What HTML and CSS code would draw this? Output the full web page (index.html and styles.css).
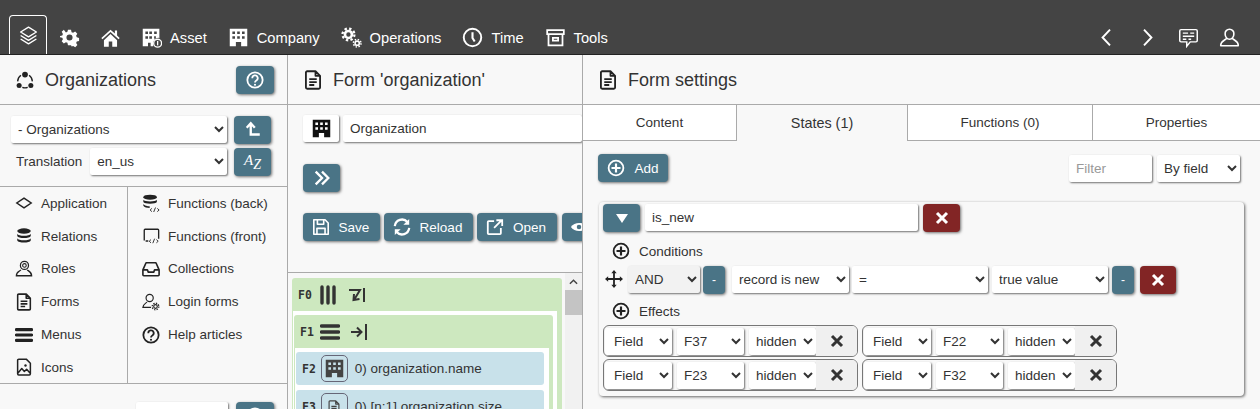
FILE: index.html
```html
<!DOCTYPE html>
<html lang="en">
<head>
    <meta charset="UTF-8">
    <title>Form builder</title>
    <link rel="stylesheet" href="styles.css">
</head>
<body>
    <svg class="defs" width="0" height="0">
        <symbol id="i-doc" viewBox="0 0 20 24"><path d="M3 1.500h10l5.500 5.500V21a1.500 1.500 0 0 1-1.500 1.500H3A1.500 1.500 0 0 1 1.500 21V3A1.500 1.500 0 0 1 3 1.500zM13 1.500V7h5.500M5.500 11h9M5.500 14.500h9M5.500 18h6" fill="none" stroke="currentColor" stroke-width="2.200" stroke-linejoin="round"/></symbol>
        <symbol id="i-building" viewBox="0 0 24 24"><path fill="currentColor" fill-rule="evenodd" d="M2 2h20v20h-7v-5H9v5H2zM5 5v3h3V5zm5.500 0v3h3V5zM16 5v3h3V5zM5 10.500v3h3v-3zm5.500 0v3h3v-3zm5.500 0v3h3v-3z"/></symbol>
        <symbol id="i-plus" viewBox="0 0 20 20"><circle cx="10" cy="10" r="8.200" fill="none" stroke="currentColor" stroke-width="2"/><path d="M10 5v10M5 10h10" stroke="currentColor" stroke-width="2.400"/></symbol>
        <symbol id="i-x" viewBox="0 0 14 14"><path d="M2 2l10 10M12 2L2 12" stroke="currentColor" stroke-width="3"/></symbol>
        <symbol id="i-help" viewBox="0 0 20 20"><circle cx="10" cy="10" r="8.500" fill="none" stroke="currentColor" stroke-width="2"/><path d="M7 8a3 3 0 1 1 4.500 2.500c-1 .6-1.500 1-1.500 2.200" fill="none" stroke="currentColor" stroke-width="2"/><circle cx="10" cy="15.300" r="1.200" fill="currentColor"/></symbol>
        <symbol id="i-bars" viewBox="0 0 20 18"><path d="M1.500 3h17M1.500 9h17M1.500 15h17" stroke="currentColor" stroke-width="3.400" stroke-linecap="round"/></symbol>
    </svg>

    <header class="topbar">
        <a class="nav-tab">
            <svg class="nav-icon" viewBox="0 0 24 24"><path d="M12 2.500l9 5.500-9 5.500L3 8zM3 12l9 5.500 9-5.500M3 16l9 5.500 9-5.500" fill="none" stroke="currentColor" stroke-width="1.600" stroke-linejoin="round"/></svg>
        </a>
        <a class="nav-item">
            <svg class="nav-icon" viewBox="0 0 24 24"><path fill="currentColor" fill-rule="evenodd" d="M10 2h4l.7 3 2 .9 2.700-1.600 2.800 2.800-1.600 2.700.9 2 3 .7v4l-3 .700-.8 2 1.600 2.600-2.800 2.800-2.700-1.600-2 .8L14 22h-4l-.7-3-2-.8-2.700 1.600-2.800-2.800 1.600-2.600-.8-2-3-.7V10l3-.7.8-2-1.600-2.700 2.800-2.800L7.300 5.400l2-.9zM12 8a4 4 0 1 0 0 8 4 4 0 0 0 0-8z" transform="translate(1.500 1.500) scale(.875)"/></svg>
        </a>
        <a class="nav-item">
            <svg class="nav-icon" viewBox="0 0 24 24"><path fill="currentColor" d="M12 3L1.500 12.500l1.300 1.400L12 5.700l9.200 8.200 1.300-1.400-3-2.700V4h-2.500v3.500zM4.500 15v7.500H10v-6h4v6h5.500V15L12 8z"/></svg>
        </a>
        <a class="nav-item">
            <svg class="nav-icon" viewBox="0 0 24 24"><path fill="currentColor" fill-rule="evenodd" d="M2 2h19v10.500a6 6 0 0 0-7 7V22h-3v-4H8v4H2zM5 5v3h3V5zm4.500 0v3h3V5zM15 5v3h3V5zM5 10.500v3h3v-3zm4.500 0v3h3v-3zm5.500 0v3h2v-3z"/><circle cx="19" cy="18.500" r="4.500" fill="none" stroke="currentColor" stroke-width="1.500"/><path d="M19 16v5" stroke="currentColor" stroke-width="1.500"/></svg>
            Asset
        </a>
        <a class="nav-item">
            <svg class="nav-icon" viewBox="0 0 24 24"><use href="#i-building"/></svg>
            Company
        </a>
        <a class="nav-item">
            <svg class="nav-icon" viewBox="0 0 24 24"><g fill="none" stroke="currentColor"><circle cx="8.500" cy="8.500" r="4" stroke-width="3"/><circle cx="8.500" cy="8.500" r="6.800" stroke-width="2.600" stroke-dasharray="2.700 2.640"/><circle cx="18.500" cy="18.500" r="2.400" stroke-width="1.800"/><circle cx="18.500" cy="18.500" r="4.300" stroke-width="1.800" stroke-dasharray="1.700 1.680"/></g></svg>
            Operations
        </a>
        <a class="nav-item">
            <svg class="nav-icon" viewBox="0 0 24 24"><circle cx="12" cy="12" r="10" fill="none" stroke="currentColor" stroke-width="2.200"/><path d="M12 6v6.500l2.500 4" fill="none" stroke="currentColor" stroke-width="2.400"/></svg>
            Time
        </a>
        <a class="nav-item">
            <svg class="nav-icon" viewBox="0 0 24 24"><path d="M2.500 3.500h19V8h-19zM4 8v13h16V8M9 12.500h6v3H9z" fill="none" stroke="currentColor" stroke-width="2"/></svg>
            Tools
        </a>
        <div class="nav-right">
            <svg class="nav-icon" viewBox="0 0 24 24"><path d="M16 3l-8.500 9 8.500 9" fill="none" stroke="currentColor" stroke-width="2.200"/></svg>
            <svg class="nav-icon" viewBox="0 0 24 24"><path d="M8 3l8.500 9L8 21" fill="none" stroke="currentColor" stroke-width="2.200"/></svg>
            <svg class="nav-icon" viewBox="0 0 24 24"><path d="M3.500 3h17A1.500 1.500 0 0 1 22 4.500v11a1.500 1.500 0 0 1-1.500 1.500H14l-4 5v-5H3.500A1.500 1.500 0 0 1 2 15.500v-11A1.500 1.500 0 0 1 3.500 3zM5.500 7h6M14 7h4.500M5.500 10.500h13M5.500 14h4M12 14h3" fill="none" stroke="currentColor" stroke-width="1.700"/></svg>
            <svg class="nav-icon" viewBox="0 0 24 24"><path d="M12 2.500a5 5 0 0 1 5 5.500c0 3-2 6-5 6s-5-3-5-6a5 5 0 0 1 5-5.500zM8.500 13c-1 2-6 2.500-6.500 7.500v1h20v-1c-.5-5-5.500-5.500-6.500-7.500" fill="none" stroke="currentColor" stroke-width="1.800" stroke-linejoin="round"/></svg>
        </div>
    </header>

    <main class="panels">
        <section class="panel panel-left">
            <div class="panel-head">
                <svg class="head-icon" viewBox="0 0 20 20"><circle cx="10" cy="4" r="3.200" fill="currentColor"/><circle cx="3.500" cy="16" r="2.800" fill="currentColor"/><circle cx="16.500" cy="16" r="2.800" fill="currentColor"/><path d="M5.500 4.800A9 9 0 0 0 1.800 11.500M14.500 4.800a9 9 0 0 1 3.700 6.700M7 18.200a9 9 0 0 0 6 0" fill="none" stroke="currentColor" stroke-width="1.500"/></svg>
                <h2>Organizations</h2>
                <button class="btn btn-icon btn-help push-right"><svg class="btn-svg" viewBox="0 0 20 20"><use href="#i-help"/></svg></button>
            </div>
            <div class="picker">
                <div class="picker-row">
                    <select class="field grow"><option>- Organizations</option></select>
                    <button class="btn btn-icon"><svg class="btn-svg" viewBox="0 0 20 20"><path d="M3 7.500L7.500 2.500 12 7.500M7.500 3v12h10" fill="none" stroke="currentColor" stroke-width="2.600"/></svg></button>
                </div>
                <div class="picker-row">
                    <span class="picker-label">Translation</span>
                    <select class="field grow"><option>en_us</option></select>
                    <button class="btn btn-icon btn-az"><i>A<sub>Z</sub></i></button>
                </div>
            </div>
            <div class="entries">
                <div class="entry-col">
                    <a class="entry"><svg viewBox="0 0 20 20"><path d="M10 4.500L18 10l-8 5.500L2 10z" fill="none" stroke="currentColor" stroke-width="1.600"/></svg>Application</a>
                    <a class="entry"><svg viewBox="0 0 20 20"><ellipse cx="10" cy="4.500" rx="7.500" ry="3" fill="currentColor"/><path d="M2.500 7.500c1 3 14 3 15 0V10c-1 3-14 3-15 0zM2.500 12.500c1 3 14 3 15 0V15c-1 3-14 3-15 0z" fill="currentColor"/></svg>Relations</a>
                    <a class="entry"><svg viewBox="0 0 20 20"><circle cx="10.500" cy="6" r="4.500" fill="none" stroke="currentColor" stroke-width="1.400"/><circle cx="10.500" cy="6" r="2" fill="none" stroke="currentColor" stroke-width="1.200"/><path d="M6.500 11c-1 1.500-5 2-5 6.500h17c0-4-3-5-5-6.500" fill="none" stroke="currentColor" stroke-width="1.400"/></svg>Roles</a>
                    <a class="entry"><svg viewBox="0 0 20 24"><use href="#i-doc"/></svg>Forms</a>
                    <a class="entry"><svg viewBox="0 0 20 18"><use href="#i-bars"/></svg>Menus</a>
                    <a class="entry"><svg viewBox="0 0 20 24"><path d="M3 1.500h10l5.500 5.500V21a1.500 1.500 0 0 1-1.500 1.500H3A1.500 1.500 0 0 1 1.500 21V3A1.500 1.500 0 0 1 3 1.500zM2 20l5-6 3.500 4 3-3 4.500 5" fill="none" stroke="currentColor" stroke-width="2" stroke-linejoin="round"/><circle cx="12" cy="10" r="1.600" fill="currentColor"/></svg>Icons</a>
                </div>
                <div class="entry-col">
                    <a class="entry"><svg viewBox="0 0 20 20"><ellipse cx="9" cy="3.500" rx="7.500" ry="2.800" fill="currentColor"/><path d="M1.500 6.500c1 2.500 14 2.500 15 0V9c-1 2.500-14 2.500-15 0zM1.500 11c1 2 5 2.500 7 2.500v2c-3 0-6-.8-7-2.500z" fill="currentColor"/><path d="M11 16l-2 1.800 2 1.800M17 16l2 1.800-2 1.800M15 15l-2 5" fill="none" stroke="currentColor" stroke-width="1"/></svg>Functions (back)</a>
                    <a class="entry"><svg viewBox="0 0 20 20"><path d="M2.500 15V3.500a1 1 0 0 1 1-1h14a1 1 0 0 1 1 1V13M4 15.500h3" fill="none" stroke="currentColor" stroke-width="1.500"/><path d="M10 14l-2 1.800 2 1.800M16 14l2 1.800-2 1.800M14 13l-2 5" fill="none" stroke="currentColor" stroke-width="1"/></svg>Functions (front)</a>
                    <a class="entry"><svg viewBox="0 0 20 20"><path d="M4.500 3h11L19 11v5.500a1 1 0 0 1-1 1H2a1 1 0 0 1-1-1V11zM1 11h5l1 2.500h6l1-2.500h5" fill="none" stroke="currentColor" stroke-width="1.800" stroke-linejoin="round"/></svg>Collections</a>
                    <a class="entry"><svg viewBox="0 0 20 20"><circle cx="8.500" cy="5.500" r="4" fill="none" stroke="currentColor" stroke-width="1.300"/><path d="M5.500 10c-1 1.500-4 2-4.500 6h9" fill="none" stroke="currentColor" stroke-width="1.300"/><circle cx="15" cy="15" r="2" fill="none" stroke="currentColor" stroke-width="1.300"/><circle cx="15" cy="15" r="3.700" fill="none" stroke="currentColor" stroke-width="1.400" stroke-dasharray="1.500 1.400"/></svg>Login forms</a>
                    <a class="entry"><svg viewBox="0 0 20 20"><use href="#i-help"/></svg>Help articles</a>
                </div>
            </div>
            <div class="panel-next">
                <svg class="next-icon" viewBox="0 0 20 24"><use href="#i-doc"/></svg>
                <select class="field next-select push-right"><option></option></select>
                <button class="btn btn-icon btn-help"><svg class="btn-svg" viewBox="0 0 20 20"><use href="#i-help"/></svg></button>
            </div>
        </section>

        <section class="panel panel-mid">
            <div class="panel-head">
                <svg class="head-icon" viewBox="0 0 20 24"><use href="#i-doc"/></svg>
                <h2>Form 'organization'</h2>
            </div>
            <div class="form-tools">
                <div class="name-row">
                    <span class="icon-pick"><svg viewBox="0 0 24 24"><use href="#i-building"/></svg></span>
                    <input class="field grow" value="Organization">
                </div>
                <button class="btn btn-icon btn-more"><svg class="btn-svg" viewBox="0 0 20 20"><path d="M3 3l7 7-7 7M10 3l7 7-7 7" fill="none" stroke="currentColor" stroke-width="2.600"/></svg></button>
                <div class="action-row">
                    <button class="btn btn-save"><svg class="btn-svg" viewBox="0 0 20 20"><path d="M2 2h12.500L18 5.500V18H2zM6 2v5h7V2M5.500 18v-6.500h9V18" fill="none" stroke="currentColor" stroke-width="1.800" stroke-linejoin="round"/></svg>Save</button>
                    <button class="btn btn-reload"><svg class="btn-svg" viewBox="0 0 20 20"><path d="M2 9a8 8 0 0 1 14-4.500M18 11a8 8 0 0 1-14 4.500" fill="none" stroke="currentColor" stroke-width="2.500"/><path d="M18 1v6.500h-6.500zM2 19v-6.500h6.500z" fill="currentColor"/></svg>Reload</button>
                    <button class="btn btn-open"><svg class="btn-svg" viewBox="0 0 20 20"><path d="M9 3.500H3A1 1 0 0 0 2 4.500V17a1 1 0 0 0 1 1h12.500a1 1 0 0 0 1-1v-6M9 11l8-8M11.500 2.500H18V9" fill="none" stroke="currentColor" stroke-width="2"/></svg>Open</button>
                    <button class="btn btn-eye"><svg class="btn-svg" viewBox="0 0 20 20"><path d="M1 10c4-6 14-6 18 0-4 6-14 6-18 0z" fill="currentColor"/><circle cx="10" cy="10" r="2.500" fill="#4a7486"/></svg></button>
                </div>
            </div>
            <div class="builder">
                <div class="tree">
                    <div class="box-green">
                        <div class="box-head">
                            <b class="ref">F0</b>
                            <svg class="tree-icon" viewBox="0 0 18 20"><path d="M3 2v16M9 2v16M15 2v16" stroke="currentColor" stroke-width="3.400" stroke-linecap="round"/></svg>
                            <svg class="tree-icon tree-icon-gap" viewBox="0 0 18 20"><path d="M1 5h11l-6 10M6 9l-.5 6 6-1M16 3v14" fill="none" stroke="currentColor" stroke-width="2"/></svg>
                        </div>
                        <div class="box-body">
                            <div class="box-green box-inner">
                                <div class="box-head">
                                    <b class="ref">F1</b>
                                    <svg class="tree-icon" viewBox="0 0 20 18"><use href="#i-bars"/></svg>
                                    <svg class="tree-icon tree-icon-gap" viewBox="0 0 18 20"><path d="M1 10h10M7 5.500l4.500 4.500L7 14.500M16 2v16" fill="none" stroke="currentColor" stroke-width="2"/></svg>
                                </div>
                                <div class="box-body fields">
                                    <div class="field-row">
                                        <b class="ref">F2</b>
                                        <span class="field-icon"><svg viewBox="0 0 24 24"><use href="#i-building"/></svg></span>
                                        <span>0) organization.name</span>
                                    </div>
                                    <div class="field-row">
                                        <b class="ref">F3</b>
                                        <span class="field-icon field-icon-doc"><svg viewBox="0 0 20 24"><use href="#i-doc"/></svg></span>
                                        <span>0) [n:1] organization.size</span>
                                    </div>
                                </div>
                            </div>
                        </div>
                    </div>
                </div>
                <div class="scrollbar">
                    <svg class="scroll-up" viewBox="0 0 10 6"><path d="M1 5l4-4 4 4" fill="none" stroke="currentColor" stroke-width="1.600"/></svg>
                    <div class="scroll-thumb"></div>
                </div>
            </div>
        </section>

        <section class="panel panel-right">
            <div class="panel-head">
                <svg class="head-icon" viewBox="0 0 20 24"><use href="#i-doc"/></svg>
                <h2>Form settings</h2>
            </div>
            <div class="tabs">
                <div class="tab tab-content">Content</div>
                <div class="tab tab-states active">States (1)</div>
                <div class="tab tab-functions">Functions (0)</div>
                <div class="tab tab-props">Properties</div>
            </div>
            <div class="settings">
                <div class="settings-bar">
                    <button class="btn btn-add"><svg class="btn-svg" viewBox="0 0 20 20"><use href="#i-plus"/></svg>Add</button>
                    <input class="field filter push-right" placeholder="Filter">
                    <select class="field by-field"><option>By field</option></select>
                </div>
                <div class="state-card">
                    <div class="state-head">
                        <button class="btn btn-icon"><svg class="btn-tri" viewBox="0 0 12 9"><path d="M0 0h12L6 9z" fill="currentColor"/></svg></button>
                        <input class="field state-name" value="is_new">
                        <button class="btn btn-icon btn-red"><svg class="btn-x" viewBox="0 0 14 14"><use href="#i-x"/></svg></button>
                    </div>
                    <div class="group-label"><svg viewBox="0 0 20 20"><use href="#i-plus"/></svg>Conditions</div>
                    <div class="condition">
                        <svg class="move" viewBox="0 0 20 20"><path fill="currentColor" d="M10 0l3 3.500h-2v5.500h5.500V7l3.500 3-3.500 3v-2H11v5.500h2L10 20l-3-3.500h2V11H3.500v2L0 10l3.500-3v2H9V3.500H7z"/></svg>
                        <select class="field cond-and"><option>AND</option></select>
                        <button class="btn btn-minus">-</button>
                        <select class="field cond-side"><option>record is new</option></select>
                        <select class="field cond-op"><option>=</option></select>
                        <select class="field cond-value"><option>true value</option></select>
                        <button class="btn btn-minus">-</button>
                        <button class="btn btn-icon btn-red cond-del"><svg class="btn-x" viewBox="0 0 14 14"><use href="#i-x"/></svg></button>
                    </div>
                    <div class="group-label"><svg viewBox="0 0 20 20"><use href="#i-plus"/></svg>Effects</div>
                    <div class="effects">
                        <div class="effect">
                            <select class="field fx"><option>Field</option></select>
                            <select class="field fx"><option>F37</option></select>
                            <select class="field fx"><option>hidden</option></select>
                            <span class="fx-del"><svg viewBox="0 0 14 14"><use href="#i-x"/></svg></span>
                        </div>
                        <div class="effect">
                            <select class="field fx"><option>Field</option></select>
                            <select class="field fx"><option>F22</option></select>
                            <select class="field fx"><option>hidden</option></select>
                            <span class="fx-del"><svg viewBox="0 0 14 14"><use href="#i-x"/></svg></span>
                        </div>
                        <div class="effect">
                            <select class="field fx"><option>Field</option></select>
                            <select class="field fx"><option>F23</option></select>
                            <select class="field fx"><option>hidden</option></select>
                            <span class="fx-del"><svg viewBox="0 0 14 14"><use href="#i-x"/></svg></span>
                        </div>
                        <div class="effect">
                            <select class="field fx"><option>Field</option></select>
                            <select class="field fx"><option>F32</option></select>
                            <select class="field fx"><option>hidden</option></select>
                            <span class="fx-del"><svg viewBox="0 0 14 14"><use href="#i-x"/></svg></span>
                        </div>
                    </div>
                </div>
            </div>
        </section>
    </main>
</body>
</html>
```
FILE: styles.css
```css
html, body {
    margin: 0;
    height: 409px;
    overflow: hidden;
}

body {
    font-family: "Liberation Sans", Arial, sans-serif;
    font-size: 13.5px;
    color: #333;
    background: #f8f8f8;
    display: flex;
    flex-direction: column;
}

.defs {
    display: block;
    height: 0;
}

/* top bar */
.topbar {
    flex: none;
    box-sizing: border-box;
    height: 55px;
    background: #444;
    border-bottom: 1px solid #222;
    color: #fff;
    display: flex;
    align-items: flex-end;
    padding-left: 9px;
    font-size: 14.7px;
}

.nav-icon {
    width: 21px;
    height: 21px;
    flex: none;
}

.nav-tab {
    box-sizing: border-box;
    width: 38px;
    height: 39px;
    border: 1px solid #fff;
    border-bottom: 0;
    border-radius: 4px 4px 0 0;
    display: flex;
    align-items: center;
    justify-content: center;
    margin-right: 12px;
    padding-top: 1px;
}

.nav-item {
    height: 39px;
    display: flex;
    align-items: center;
    gap: 8px;
    margin-right: 21px;
    padding-top: 6px;
    box-sizing: border-box;
}

.nav-tab + .nav-item, .nav-tab + .nav-item + .nav-item {
    margin-right: 20px;
}

.nav-right {
    margin-left: auto;
    height: 39px;
    padding: 6px 20px 0 0;
    box-sizing: border-box;
    display: flex;
    align-items: center;
    gap: 20px;
}

/* panels */
.panels {
    flex: 1;
    display: flex;
    min-height: 0;
}

.panel {
    box-sizing: border-box;
    display: flex;
    flex-direction: column;
    overflow: hidden;
    border-right: 1px solid #aaa;
}

.panel-left {
    width: 288px;
}

.panel-mid {
    width: 295px;
}

.panel-right {
    flex: 1;
    border-right: 0;
}

.panel-head {
    flex: none;
    box-sizing: border-box;
    height: 50px;
    padding: 1px 13px 0 16px;
    border-bottom: 1px solid #aaa;
    display: flex;
    align-items: center;
    gap: 11px;
}

.panel-head h2 {
    margin: 0;
    font-size: 18px;
    font-weight: 400;
    color: #333;
}

.head-icon {
    width: 18px;
    height: 20px;
    flex: none;
    color: #222;
}

.push-right {
    margin-left: auto;
}

/* controls */
.field {
    box-sizing: border-box;
    height: 27px;
    min-width: 0;
    background: #fff;
    border: 0;
    border-radius: 2px;
    box-shadow: 1px 1px 2px rgba(0, 0, 0, 0.55);
    font-family: inherit;
    font-size: 13.5px;
    color: #333;
    padding: 0 3px;
}

input.field {
    padding: 0 7px;
}

.field::placeholder {
    color: #999;
}

.grow {
    flex: 1;
}

.btn {
    box-sizing: border-box;
    height: 28px;
    flex: none;
    border: 0;
    border-radius: 4px;
    background: #4a7486;
    color: #fff;
    font-family: inherit;
    font-size: 13.5px;
    box-shadow: 1px 1px 3px rgba(0, 0, 0, 0.55);
    display: inline-flex;
    align-items: center;
    justify-content: center;
    gap: 9px;
    padding: 0;
}

.btn-icon {
    width: 37px;
}

.btn-help {
    width: 38px;
}

.btn-svg {
    width: 18px;
    height: 18px;
    flex: none;
}

.btn-az {
    font-family: "Liberation Serif", serif;
    font-size: 15px;
}

.btn-az sub {
    font-size: 14px;
}

.btn-red {
    background: #822525;
}

.btn-x {
    width: 14px;
    height: 14px;
}

.btn-tri {
    width: 12px;
    height: 9px;
}

.btn-minus {
    width: 22px;
    font-size: 12px;
    margin-right: 4px;
}

/* left panel */
.picker {
    flex: none;
    box-sizing: border-box;
    height: 82px;
    padding: 11px 16px 0 11px;
    border-bottom: 1px solid #aaa;
    display: flex;
    flex-direction: column;
    gap: 4px;
}

.picker-row {
    display: flex;
    align-items: flex-start;
    gap: 7px;
}

.picker-label {
    margin: 0 1px 0 5px;
    line-height: 27px;
}

.entries {
    flex: none;
    box-sizing: border-box;
    height: 197px;
    display: flex;
    border-bottom: 1px solid #aaa;
}

.entry-col:first-child {
    box-sizing: border-box;
    width: 128px;
    border-right: 1px solid #aaa;
    padding-left: 15px;
}

.entry-col:last-child {
    padding-left: 14px;
}

.entry {
    height: 32.8px;
    display: flex;
    align-items: center;
    gap: 8px;
}

.entry svg {
    width: 18px;
    height: 18px;
    flex: none;
    color: #222;
}

.panel-next {
    flex: none;
    padding: 18px 13px 0 11px;
    display: flex;
    align-items: flex-start;
    gap: 8px;
}

.next-icon {
    width: 12px;
    height: 20px;
    margin-top: 6px;
    color: #222;
}

.next-select {
    width: 92px;
}

/* middle panel */
.form-tools {
    flex: none;
    box-sizing: border-box;
    height: 168px;
    padding: 10px 0 0 15px;
    border-bottom: 1px solid #aaa;
    overflow: hidden;
}

.name-row {
    display: flex;
    gap: 4px;
}

.icon-pick {
    box-sizing: border-box;
    flex: none;
    width: 36px;
    height: 27px;
    background: #fff;
    border-radius: 2px;
    box-shadow: 1px 1px 2px rgba(0, 0, 0, 0.55);
    display: flex;
    align-items: center;
    justify-content: center;
}

.icon-pick svg {
    width: 21px;
    height: 21px;
    color: #111;
}

.btn-more {
    margin-top: 22px;
    display: flex;
}

.action-row {
    margin-top: 21px;
    display: flex;
    gap: 4px;
    width: 340px;
}

.btn-save, .btn-reload, .btn-open {
    padding-right: 2px;
}

.btn-save {
    width: 77px;
}

.btn-reload {
    width: 89px;
}

.btn-open {
    width: 80px;
}

.btn-eye {
    width: 60px;
    margin-left: 1px;
    justify-content: flex-start;
    padding-left: 8px;
}

.builder {
    flex: 1;
    min-height: 0;
    display: flex;
    padding-top: 5px;
    overflow: hidden;
}

.tree {
    flex: none;
    width: 277px;
    padding-left: 4px;
    box-sizing: border-box;
}

.box-green {
    width: 270px;
    background: #cde8bf;
    border-radius: 3px;
}

.box-head {
    height: 33px;
    box-sizing: border-box;
    padding-left: 6px;
    display: flex;
    align-items: center;
    gap: 6px;
}

.ref {
    font-family: "DejaVu Sans Mono", monospace;
    font-size: 11.5px;
    color: #333;
}

.tree-icon {
    width: 20px;
    height: 20px;
    flex: none;
    color: #333;
}

.tree-icon-gap {
    margin-left: 3px;
}

.box-body {
    background: #fff;
    margin: 0 5px 0 1px;
    padding: 4px 0 0 1px;
}

.box-inner {
    width: 259px;
}

.fields {
    margin: 0 4px 0 1px;
    padding: 4px 0 0 1px;
    display: flex;
    flex-direction: column;
    gap: 5px;
}

.field-row {
    height: 33px;
    width: 248px;
    background: #c8e1ea;
    border-radius: 3px;
    display: flex;
    align-items: center;
    gap: 5px;
    padding-left: 6px;
    box-sizing: border-box;
    font-size: 13.5px;
    flex: none;
}

.field-icon {
    box-sizing: border-box;
    width: 27px;
    height: 27px;
    border: 1px solid #667;
    border-radius: 5px;
    display: flex;
    align-items: center;
    justify-content: center;
    margin-right: 2px;
    flex: none;
}

.field-icon svg {
    width: 21px;
    height: 21px;
    color: #444;
}

.field-icon-doc svg {
    width: 12px;
    height: 14px;
}

.scrollbar {
    flex: 1;
    background: #f1f1f1;
    margin-top: -5px;
    display: flex;
    flex-direction: column;
    align-items: center;
}

.scroll-up {
    width: 9px;
    height: 6px;
    margin-top: 6px;
    color: #444;
}

.scroll-thumb {
    width: 100%;
    height: 25px;
    background: #c4c4c4;
    margin-top: 5px;
}

/* right panel */
.tabs {
    flex: none;
    display: flex;
    height: 36px;
}

.tab {
    box-sizing: border-box;
    background: #fff;
    border-right: 1px solid #aaa;
    border-bottom: 1px solid #aaa;
    display: flex;
    align-items: center;
    justify-content: center;
    padding-bottom: 1px;
}

.tab-content {
    width: 154px;
}

.tab-states {
    width: 171px;
    padding: 0;
}

.tab.active {
    background: #f8f8f8;
    border-bottom: 0;
    font-size: 14.4px;
}

.tab-functions {
    width: 185px;
}

.tab-props {
    flex: 1;
    border-right: 0;
}

.settings {
    flex: 1;
    min-height: 0;
    padding: 13px 20px 0 15px;
}

.settings-bar {
    display: flex;
    align-items: center;
    gap: 5px;
    height: 28px;
}

.btn-add {
    width: 70px;
}

.filter, .by-field {
    width: 83px;
}

.state-card {
    box-sizing: border-box;
    margin: 20px 0 0 1px;
    width: 645px;
    height: 194px;
    border-radius: 4px;
    background: #f8f8f8;
    box-shadow: 1px 1px 3px rgba(0, 0, 0, 0.6);
    padding: 2px 4px;
}

.state-head {
    display: flex;
    gap: 5px;
}

.state-name {
    width: 273px;
}

.group-label {
    height: 14px;
    display: flex;
    align-items: center;
    gap: 9px;
    margin-left: 9px;
}

.state-head + .group-label {
    margin-top: 12px;
}

.group-label svg {
    width: 18px;
    height: 18px;
    flex: none;
    color: #222;
}

.condition {
    display: flex;
    align-items: flex-start;
    gap: 3px;
    margin: 8px 0 10px 2px;
}

.move {
    width: 18px;
    height: 18px;
    flex: none;
    margin: 4px 2px 0 0;
    color: #222;
}

.cond-and {
    width: 72px;
    background: #f2f2f2;
}

.cond-side {
    width: 117px;
}

.cond-op {
    width: 136px;
}

.cond-value {
    width: 116px;
    margin: 0 1px;
}

.cond-del {
    width: 36px;
    margin-left: -1px;
}

.effects {
    margin-top: 7px;
    display: grid;
    grid-template-columns: 255px 255px;
    column-gap: 4px;
    row-gap: 2px;
}

.effect {
    box-sizing: border-box;
    height: 32px;
    border: 1px solid #777;
    border-radius: 6px;
    display: flex;
    align-items: center;
    gap: 5px;
    padding-left: 1px;
    overflow: hidden;
}

.fx {
    width: 67px;
}

.fx:first-child {
    padding-left: 5px;
}

.fx-del {
    flex: 1;
    margin-left: -5px;
    align-self: stretch;
    background: #f0f0f0;
    display: flex;
    align-items: center;
    justify-content: center;
}

.fx-del svg {
    width: 14px;
    height: 14px;
    color: #333;
}
```
